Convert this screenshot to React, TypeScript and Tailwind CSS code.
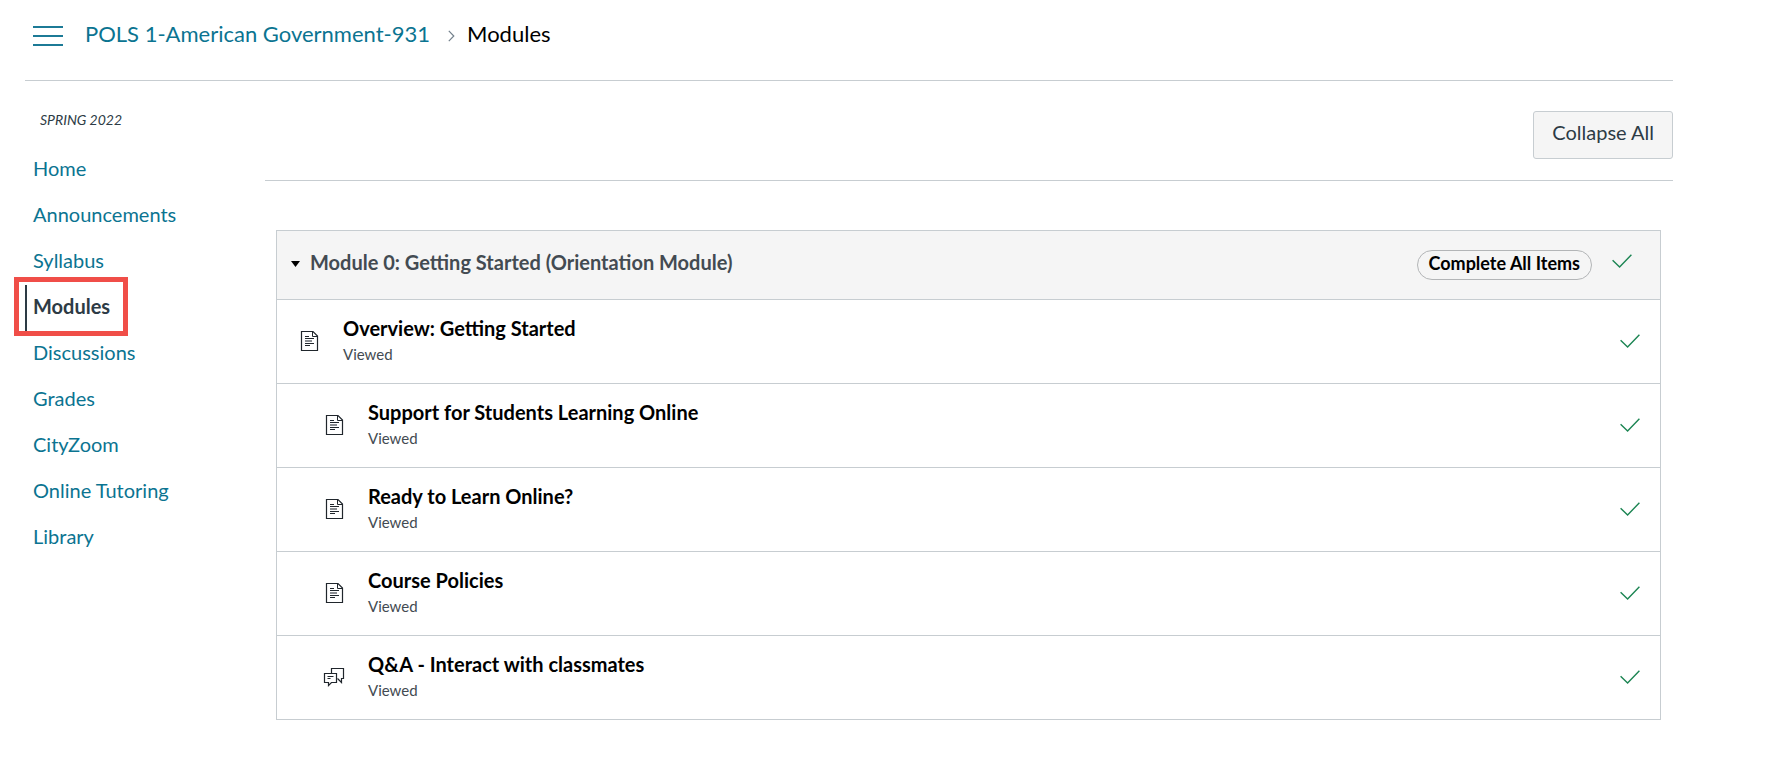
import { useState } from "react";

const navItems = [
  "Home",
  "Announcements",
  "Syllabus",
  "Modules",
  "Discussions",
  "Grades",
  "CityZoom",
  "Online Tutoring",
  "Library",
];

const moduleItems = [
  { title: "Overview: Getting Started", type: "page", indent: false },
  { title: "Support for Students Learning Online", type: "page", indent: true },
  { title: "Ready to Learn Online?", type: "page", indent: true },
  { title: "Course Policies", type: "page", indent: true },
  { title: "Q&A - Interact with classmates", type: "discussion", indent: true },
];

function PageIcon() {
  return (
    <svg width="20" height="22" viewBox="0 0 20 22" fill="none" stroke="#20262c" aria-hidden="true">
      <path d="M1.5 1.5h11.5l4.5 4.5v14.5h-16z" strokeWidth="1.2" />
      <path d="M12.5 1.5v5h5" />
      <path d="M5 6.5h4M5 8.5h9M5 13.5h9M5 15.5h5" />
      <path d="M5 11h7" strokeWidth="2" stroke="#8b8e93" />
    </svg>
  );
}

function DiscussionIcon() {
  return (
    <svg className="-ml-0.5" width="22" height="22" viewBox="0 0 22 22" fill="none" stroke="#20262c" aria-hidden="true">
      <path d="M8.5 7V2.5h12v10h-2v4l-4-4" strokeWidth="1.2" />
      <path d="M1.5 7.5h12v9H8.5l-3 3v-3h-4z" strokeWidth="1.2" />
      <path d="M4.5 10.5h6M4.5 12.5h3" />
    </svg>
  );
}

function Check() {
  return (
    <svg width="20" height="14" viewBox="0 0 20 14" fill="none" stroke="#1c8553" role="img" aria-label="Completed">
      <path d="M0.6 6.2l7 6.8L19.4 0.7" strokeWidth="1.4" />
    </svg>
  );
}

function Breadcrumbs() {
  return (
    <header className="flex h-[81px] items-start border-b border-[#c7cdd1] pl-2">
      <button type="button" aria-label="Toggle course navigation" className="mt-[26px] flex flex-col gap-[7px]">
        <span className="h-0.5 w-[30px] bg-[#1c7a96]" />
        <span className="h-0.5 w-[30px] bg-[#1c7a96]" />
        <span className="h-0.5 w-[30px] bg-[#1c7a96]" />
      </button>
      <nav aria-label="Breadcrumb" className="ml-[22px] mt-5 flex items-center text-[22px] leading-7">
        <a href="#course" className="text-[#0b7491]">POLS 1-American Government-931</a>
        <svg className="mr-3 ml-[18px] mt-1" width="7" height="12" viewBox="0 0 7 12" fill="none" stroke="#73818c" aria-hidden="true">
          <path d="M0.8 0.8l5 5.2-5 5.2" strokeWidth="1.2" />
        </svg>
        <span className="text-black">Modules</span>
      </nav>
    </header>
  );
}

function Sidebar() {
  return (
    <aside className="w-60 shrink-0 pt-[29px]">
      <p className="pl-[15px] text-sm leading-5 text-[#2d3b45] italic">SPRING 2022</p>
      <nav aria-label="Course" className="mt-[17px]">
        <ul>
          {navItems.map((item) =>
            item === "Modules" ? (
              <li key={item} className="relative">
                <a
                  href="#modules"
                  aria-current="page"
                  className="flex h-[46px] items-center border-l-2 border-[#2d3b45] pb-1 pl-1.5 text-xl leading-6 font-bold text-[#2d3b45]"
                >
                  {item}
                </a>
                <span className="pointer-events-none absolute -top-2 -left-[11px] h-[59px] w-[114px] border-5 border-[#f04e48]" />
              </li>
            ) : (
              <li key={item}>
                <a href="#nav" className="flex h-[46px] items-center pb-1 pl-2 text-xl leading-6 text-[#0b7491]">
                  {item}
                </a>
              </li>
            )
          )}
        </ul>
      </nav>
    </aside>
  );
}

export default function App() {
  const [open, setOpen] = useState(true);

  return (
    <div className="min-h-screen bg-white pr-[98px] pl-[25px] font-['Lato',sans-serif]">
      <Breadcrumbs />
      <div className="flex">
        <Sidebar />
        <main className="min-w-0 flex-1">
          <div className="flex justify-end border-b border-[#c7cdd1] pt-[30px] pb-[21px]">
            <button
              type="button"
              onClick={() => setOpen(!open)}
              className="rounded-[3px] border border-[#c7cdd1] bg-[#f5f5f5] px-[18px] pt-2 pb-3.5 text-xl leading-6 text-[#2d3b45]"
            >
              Collapse All
            </button>
          </div>

          <section className="mt-[49px] mr-3 ml-[11px] border border-b-0 border-[#c7cdd1]">
            <div className="flex items-start border-b border-[#c7cdd1] bg-[#f5f5f5] py-[19px] pr-7">
              <button
                type="button"
                aria-expanded={open}
                onClick={() => setOpen(!open)}
                className="flex items-center gap-2.5 pl-3.5 text-xl leading-6 font-bold text-[#434b52]"
              >
                <svg className="mt-1" width="9" height="6" viewBox="0 0 9 6" fill="#000" aria-hidden="true">
                  <path d="M0 0h9L4.5 6z" />
                </svg>
                Module 0: Getting Started (Orientation Module)
              </button>
              <span className="ml-auto rounded-full border border-[#b3b5b7] px-[11px] pb-1 text-lg leading-6 font-bold text-black">
                Complete All Items
              </span>
              <span className="mt-1 ml-5 flex">
                <Check />
              </span>
            </div>
            {open && (
              <ul>
                {moduleItems.map((item) => (
                  <li
                    key={item.title}
                    className={`flex items-center border-b border-[#c7cdd1] pt-4 pr-5 pb-[19px] ${item.indent ? "pl-12" : "pl-[23px]"}`}
                  >
                    <span className="mt-0.5 flex w-[43px] shrink-0">
                      {item.type === "page" ? <PageIcon /> : <DiscussionIcon />}
                    </span>
                    <div>
                      <a href="#item" className="block text-xl leading-6 font-bold text-black">
                        {item.title}
                      </a>
                      <p className="mt-1 text-[15px] leading-5 text-[#434b52]">Viewed</p>
                    </div>
                    <span className="mt-0.5 ml-auto flex">
                      <Check />
                    </span>
                  </li>
                ))}
              </ul>
            )}
          </section>
        </main>
      </div>
    </div>
  );
}
